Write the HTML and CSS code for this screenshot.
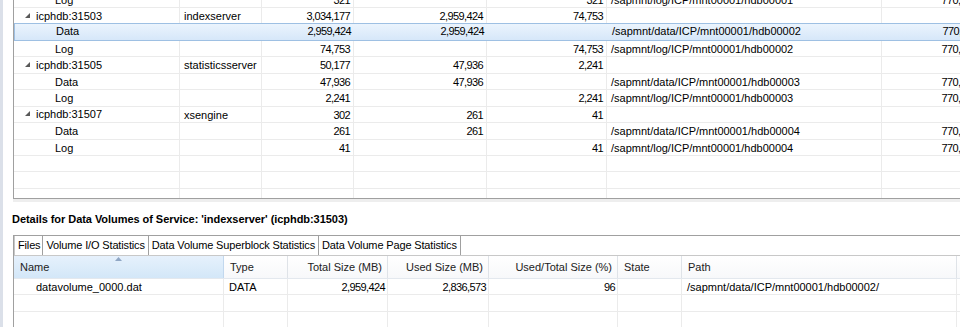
FILE: index.html
```html
<!DOCTYPE html>
<html>
  <head>
    <meta charset="UTF-8" />
    <title>Data Volumes</title>
    <link rel="stylesheet" href="styles.css">
  </head>
  <body>
    <div class="edge"></div>
    <div class="main">
      <div class="volumes">
        <div class="tree">
          <div class="row">
            <div class="cell child">Log</div>
            <div class="cell"></div>
            <div class="cell num">321</div>
            <div class="cell num"></div>
            <div class="cell num">321</div>
            <div class="cell">/sapmnt/log/ICP/mnt00001/hdb00001</div>
            <div class="cell num">770,048</div>
          </div>
          <div class="row">
            <div class="cell host"><svg class="twisty" width="5" height="5" viewBox="0 0 5 5"><polygon points="5,0 5,5 0,5" /></svg>icphdb:31503</div>
            <div class="cell">indexserver</div>
            <div class="cell num">3,034,177</div>
            <div class="cell num">2,959,424</div>
            <div class="cell num">74,753</div>
            <div class="cell"></div>
            <div class="cell"></div>
          </div>
          <div class="row selected">
            <div class="cell child">Data</div>
            <div class="cell"></div>
            <div class="cell num">2,959,424</div>
            <div class="cell num">2,959,424</div>
            <div class="cell num"></div>
            <div class="cell">/sapmnt/data/ICP/mnt00001/hdb00002</div>
            <div class="cell num">770,048</div>
          </div>
          <div class="row">
            <div class="cell child">Log</div>
            <div class="cell"></div>
            <div class="cell num">74,753</div>
            <div class="cell num"></div>
            <div class="cell num">74,753</div>
            <div class="cell">/sapmnt/log/ICP/mnt00001/hdb00002</div>
            <div class="cell num">770,048</div>
          </div>
          <div class="row">
            <div class="cell host"><svg class="twisty" width="5" height="5" viewBox="0 0 5 5"><polygon points="5,0 5,5 0,5" /></svg>icphdb:31505</div>
            <div class="cell">statisticsserver</div>
            <div class="cell num">50,177</div>
            <div class="cell num">47,936</div>
            <div class="cell num">2,241</div>
            <div class="cell"></div>
            <div class="cell"></div>
          </div>
          <div class="row">
            <div class="cell child">Data</div>
            <div class="cell"></div>
            <div class="cell num">47,936</div>
            <div class="cell num">47,936</div>
            <div class="cell num"></div>
            <div class="cell">/sapmnt/data/ICP/mnt00001/hdb00003</div>
            <div class="cell num">770,048</div>
          </div>
          <div class="row">
            <div class="cell child">Log</div>
            <div class="cell"></div>
            <div class="cell num">2,241</div>
            <div class="cell num"></div>
            <div class="cell num">2,241</div>
            <div class="cell">/sapmnt/log/ICP/mnt00001/hdb00003</div>
            <div class="cell num">770,048</div>
          </div>
          <div class="row">
            <div class="cell host"><svg class="twisty" width="5" height="5" viewBox="0 0 5 5"><polygon points="5,0 5,5 0,5" /></svg>icphdb:31507</div>
            <div class="cell">xsengine</div>
            <div class="cell num">302</div>
            <div class="cell num">261</div>
            <div class="cell num">41</div>
            <div class="cell"></div>
            <div class="cell"></div>
          </div>
          <div class="row">
            <div class="cell child">Data</div>
            <div class="cell"></div>
            <div class="cell num">261</div>
            <div class="cell num">261</div>
            <div class="cell num"></div>
            <div class="cell">/sapmnt/data/ICP/mnt00001/hdb00004</div>
            <div class="cell num">770,048</div>
          </div>
          <div class="row">
            <div class="cell child">Log</div>
            <div class="cell"></div>
            <div class="cell num">41</div>
            <div class="cell num"></div>
            <div class="cell num">41</div>
            <div class="cell">/sapmnt/log/ICP/mnt00001/hdb00004</div>
            <div class="cell num">770,048</div>
          </div>
          <div class="row">
            <div class="cell"></div><div class="cell"></div><div class="cell"></div><div class="cell"></div>
            <div class="cell"></div><div class="cell"></div><div class="cell"></div>
          </div>
          <div class="row">
            <div class="cell"></div><div class="cell"></div><div class="cell"></div><div class="cell"></div>
            <div class="cell"></div><div class="cell"></div><div class="cell"></div>
          </div>
          <div class="row">
            <div class="cell"></div><div class="cell"></div><div class="cell"></div><div class="cell"></div>
            <div class="cell"></div><div class="cell"></div><div class="cell"></div>
          </div>
        </div>
      </div>
      <div class="scrollbar"></div>

      <h2 class="details-title">Details for Data Volumes of Service: 'indexserver' (icphdb:31503)</h2>

      <div class="folder">
        <div class="tabs">
          <span class="tab active">Files</span>
          <span class="tab">Volume I/O Statistics</span>
          <span class="tab">Data Volume Superblock Statistics</span>
          <span class="tab">Data Volume Page Statistics</span>
        </div>
        <div class="files">
          <div class="frow head">
            <div class="hcell sorted">Name<svg class="sort" width="7" height="4" viewBox="0 0 7 4"><polygon points="3.5,0 7,4 0,4" /></svg></div>
            <div class="hcell">Type</div>
            <div class="hcell num">Total Size (MB)</div>
            <div class="hcell num">Used Size (MB)</div>
            <div class="hcell num">Used/Total Size (%)</div>
            <div class="hcell">State</div>
            <div class="hcell">Path</div>
            <div class="hcell"></div>
          </div>
          <div class="frow">
            <div class="cell file">datavolume_0000.dat</div>
            <div class="cell">DATA</div>
            <div class="cell num">2,959,424</div>
            <div class="cell num">2,836,573</div>
            <div class="cell num">96</div>
            <div class="cell"></div>
            <div class="cell">/sapmnt/data/ICP/mnt00001/hdb00002/</div>
            <div class="cell"></div>
          </div>
          <div class="frow">
            <div class="cell"></div><div class="cell"></div><div class="cell"></div><div class="cell"></div>
            <div class="cell"></div><div class="cell"></div><div class="cell"></div><div class="cell"></div>
          </div>
          <div class="frow">
            <div class="cell"></div><div class="cell"></div><div class="cell"></div><div class="cell"></div>
            <div class="cell"></div><div class="cell"></div><div class="cell"></div><div class="cell"></div>
          </div>
        </div>
      </div>
    </div>
  </body>
</html>
```

FILE: styles.css
```css
* {
  margin: 0;
  padding: 0;
  box-sizing: border-box;
}
body {
  height: 100vh;
  display: flex;
  overflow: hidden;
  background-color: #fff;
  color: #000;
  font-family: "Liberation Sans", Arial, sans-serif;
  font-size: 11px;
}
.edge {
  flex: none;
  width: 3px;
  background-color: #dbe0e9;
}
.main {
  flex: 1;
  min-width: 0;
  padding-left: 10px;
}

/* volumes tree */
.volumes {
  width: 1000px;
  height: 199px;
  border-left: 1px solid #a0a0a0;
  border-bottom: 1px solid #a0a0a0;
  overflow: hidden;
}
.tree {
  margin-top: -8.45px;
}
.row {
  display: grid;
  grid-template-columns: 166px 82px 92px 133px 120px 275px 99px;
  height: 16.45px;
  border-bottom: 1px solid #ebebeb;
}
.cell {
  padding: 0 4px;
  line-height: 16px;
  border-right: 1px solid #ebebeb;
  white-space: nowrap;
  overflow: hidden;
}
.num {
  text-align: right;
  padding-right: 3px;
  letter-spacing: -0.6px;
}
.host {
  display: flex;
  align-items: center;
  padding-left: 11px;
}
.twisty {
  margin-right: 6px;
  margin-top: -1px;
  fill: #595959;
}
.child {
  padding-left: 41px;
}
.row.selected {
  background: linear-gradient(#ebf4fd, #d6e7f9);
  border: 1px solid #9ec0e3;
  margin-top: -1px;
  height: 17.45px;
}
.row.selected .cell {
  border-right-color: transparent;
  line-height: 15px;
}
.scrollbar {
  height: 3px;
  background-color: #eeeeee;
}

/* details */
.details-title {
  font-size: 11px;
  font-weight: bold;
  line-height: 13px;
  letter-spacing: -0.05px;
  margin: 11px 0 9px -1px;
}
.folder {
  width: 1000px;
  height: 120px;
  border-left: 1px solid #a0a0a0;
}
.tabs {
  display: flex;
  height: 21px;
  border-top: 1px solid #a0a0a0;
  border-bottom: 1px solid #c8c8c8;
}
.tab {
  padding: 0 3px;
  line-height: 19px;
  letter-spacing: -0.15px;
  border-right: 1px solid #a0a0a0;
  background-color: #fff;
  white-space: nowrap;
}
.tab.active {
  padding: 0 2px 0 3px;
  border-left: 1px solid #c8c8c8;
}
.frow {
  display: grid;
  grid-template-columns: 210px 64px 100px 101px 129px 64px 275px 60px;
  height: 16.45px;
  border-bottom: 1px solid #ebebeb;
}
.frow.head {
  height: 23px;
  border-bottom: 1px solid #e3e8ee;
  background: linear-gradient(#fff, #f7f8fa);
}
.hcell {
  position: relative;
  padding: 0 5px 0 6px;
  line-height: 22px;
  color: #222;
  border-right: 1px solid #dfe3e8;
  white-space: nowrap;
}
.hcell.num {
  letter-spacing: 0;
}
.hcell.sorted {
  background: linear-gradient(#e6f1fc, #d3e7f8);
  border-right-color: #c2d8ee;
}
.sort {
  position: absolute;
  top: 1px;
  left: 101px;
  fill: #8fa6c4;
}
.frow .cell {
  padding-left: 5px;
}
.frow .cell.file {
  padding-left: 22px;
}
.frow .cell.num {
  padding-right: 2px;
}
```
